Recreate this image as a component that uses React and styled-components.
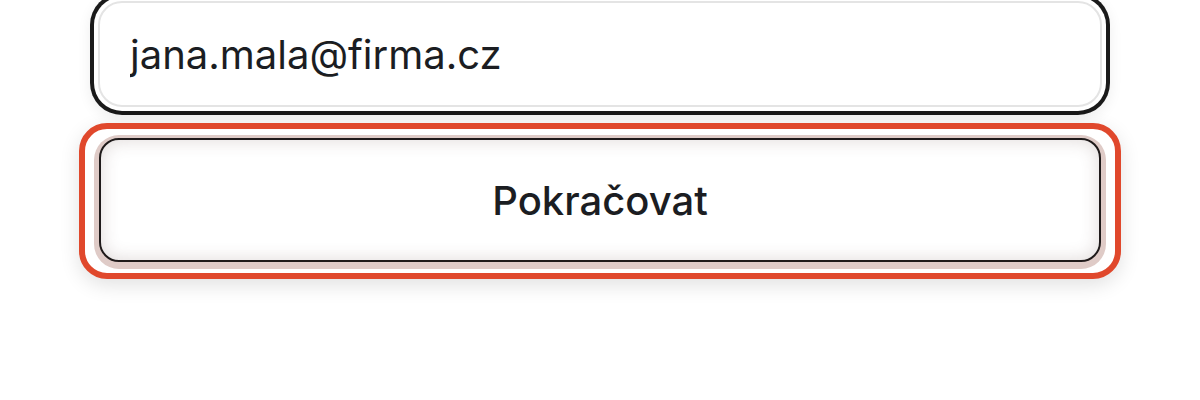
import React from "react";
import styled, { createGlobalStyle } from "styled-components";

const Global = createGlobalStyle`
  html, body { margin: 0; padding: 0; background: #ffffff; }
  body { font-family: Inter, "Noto Sans", sans-serif; }
`;

const Page = styled.div`
  width: 1200px;
  height: 400px;
  box-sizing: border-box;
  padding-top: 1px;
  display: flex;
  flex-direction: column;
  align-items: center;
  gap: 16px;
  overflow: hidden;
`;

const EmailInput = styled.input`
  box-sizing: border-box;
  width: 1004px;
  height: 106px;
  border: 2px solid #e4e4e4;
  border-radius: 24px;
  padding: 0 30px;
  background: #ffffff;
  font-family: Inter, "Noto Sans", sans-serif;
  font-size: 40px;
  color: #1b1d22;
  outline: none;
  box-shadow: 0 0 0 4px #ffffff, 0 0 0 8px #1a1a1a, 0 4px 14px 8px rgba(0, 0, 0, 0.07);
`;

const FocusRing = styled.div`
  box-sizing: border-box;
  width: 1042px;
  border: 6px solid #e0482c;
  border-radius: 28px;
  padding: 9px 14px 11px;
  background: #ffffff;
  box-shadow: 0 6px 20px rgba(0, 0, 0, 0.12);
  display: flex;
`;

const Button = styled.button`
  box-sizing: border-box;
  flex: 1;
  height: 124px;
  border: 2px solid #1f1a1a;
  border-radius: 20px;
  background: #ffffff;
  font-family: Inter, "Noto Sans", sans-serif;
  font-size: 40px;
  font-weight: 500;
  color: #1b1d22;
  cursor: pointer;
  box-shadow: inset 0 0 18px rgba(90, 60, 55, 0.2), 0 2px 0 5px #dfcbc7;
`;

export default function App() {
  return (
    <>
      <Global />
      <Page>
        <EmailInput type="email" defaultValue="jana.mala@firma.cz" />
        <FocusRing>
          <Button type="button">Pokračovat</Button>
        </FocusRing>
      </Page>
    </>
  );
}
